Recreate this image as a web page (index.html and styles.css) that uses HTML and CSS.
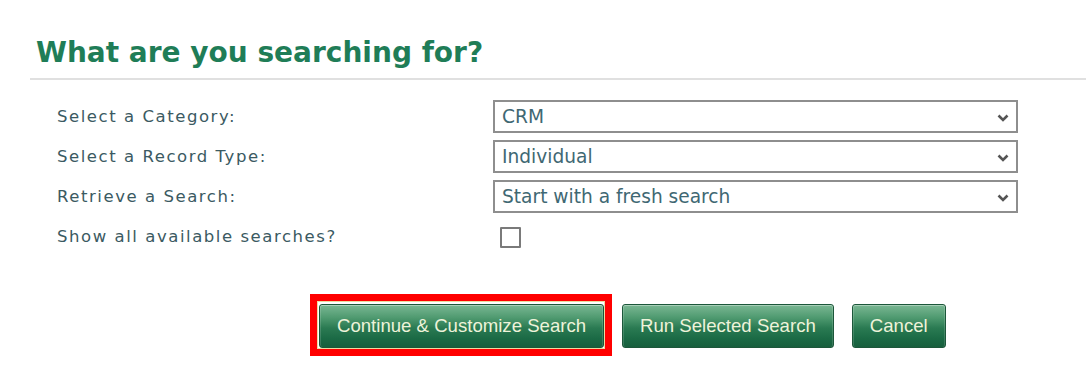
FILE: index.html
```html
<!DOCTYPE html>
<html>
<head>
<meta charset="utf-8">
<link rel="stylesheet" href="styles.css">
</head>
<body>
<div class="page">
  <div class="heading">
    <h1 class="title">What are you searching for?</h1>
  </div>
  <div class="form">
    <div class="label">Select a Category:</div>
    <div class="select"><span class="value">CRM</span><svg class="chev" width="12" height="8" viewBox="0 0 12 8"><path d="M1.5 1.5 L6 6 L10.5 1.5" fill="none" stroke="#555" stroke-width="2.6"/></svg></div>
    <div class="label">Select a Record Type:</div>
    <div class="select"><span class="value">Individual</span><svg class="chev" width="12" height="8" viewBox="0 0 12 8"><path d="M1.5 1.5 L6 6 L10.5 1.5" fill="none" stroke="#555" stroke-width="2.6"/></svg></div>
    <div class="label">Retrieve a Search:</div>
    <div class="select"><span class="value">Start with a fresh search</span><svg class="chev" width="12" height="8" viewBox="0 0 12 8"><path d="M1.5 1.5 L6 6 L10.5 1.5" fill="none" stroke="#555" stroke-width="2.6"/></svg></div>
    <div class="label">Show all available searches?</div>
    <div class="check-cell"><span class="checkbox"></span></div>
  </div>
  <div class="actions">
    <span class="highlight"><button class="btn">Continue &amp; Customize Search</button></span>
    <button class="btn btn-next">Run Selected Search</button>
    <button class="btn btn-last">Cancel</button>
  </div>
</div>
</body>
</html>
```

FILE: styles.css
```css
html, body {
  margin: 0;
  padding: 0;
  background: #fff;
}
.page {
  margin-left: 30px;
  padding-top: 36px;
  padding-bottom: 15px;
}
.heading {
  border-bottom: 2px solid #e0e0e0;
  padding-left: 6px;
  padding-bottom: 9px;
}
.title {
  margin: 0;
  font-family: "DejaVu Sans", Verdana, sans-serif;
  font-weight: bold;
  font-size: 28px;
  line-height: 33px;
  color: #1f7d57;
}
.form {
  margin-top: 20px;
  padding-left: 27px;
  display: grid;
  grid-template-columns: 436px 525px;
  grid-auto-rows: 33px;
  row-gap: 7px;
  align-items: center;
}
.label {
  font-family: "DejaVu Sans", Verdana, sans-serif;
  font-size: 16.5px;
  letter-spacing: 1.55px;
  color: #3b5a62;
  white-space: nowrap;
}
.select {
  box-sizing: border-box;
  height: 33px;
  border: 2px solid #8e8e8e;
  background: #fff;
  display: flex;
  align-items: center;
  justify-content: space-between;
  padding: 0 7px 0 7px;
}
.value {
  font-family: "DejaVu Sans", Verdana, sans-serif;
  font-size: 18.6px;
  color: #3f6873;
}
.chev {
  display: block;
  margin-top: 2px;
}
.check-cell {
  display: flex;
  align-items: center;
  height: 33px;
}
.checkbox {
  box-sizing: border-box;
  display: block;
  width: 21px;
  height: 21px;
  margin-left: 7px;
  margin-top: 1px;
  border: 2px solid #7a7a7a;
  border-radius: 1px;
  background: #fff;
}
.actions {
  margin-top: 41px;
  padding-left: 280px;
  display: flex;
  align-items: flex-start;
}
.highlight {
  display: flex;
  border: 7px solid #ff0000;
  padding: 3px 1px 1px 2px;
  background: #fff;
  box-shadow: inset 0 0 0 1px #eadca0;
}
.btn-next {
  margin-left: 10px;
  margin-top: 10px;
}
.btn-last {
  margin-left: 18px;
  margin-top: 10px;
  padding: 0 16px;
}
.btn {
  box-sizing: border-box;
  height: 44px;
  padding: 0 17px;
  border: 1px solid #1c573a;
  border-radius: 3px;
  background: linear-gradient(#7ab793 0%, #4f9a70 30%, #2a7a52 55%, #1b6a45 80%, #175f3d 100%);
  box-shadow: inset 0 1px 0 rgba(255,255,255,0.35), inset 1px 0 0 rgba(255,255,255,0.15), inset -1px 0 0 rgba(255,255,255,0.15);
  font-family: "Liberation Sans", Arial, sans-serif;
  font-size: 18.6px;
  color: #eef3da;
  cursor: pointer;
}
```
